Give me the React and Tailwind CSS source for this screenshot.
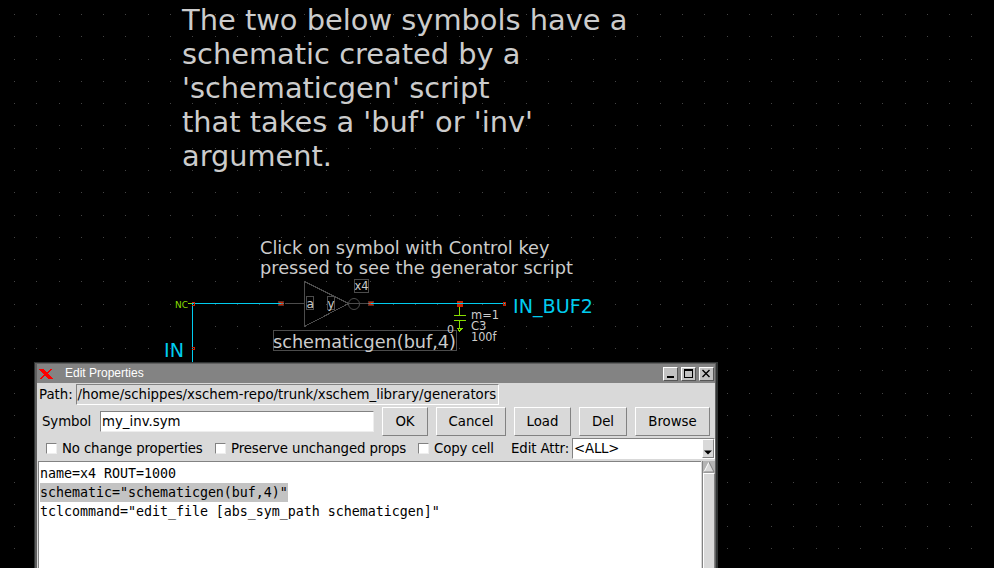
const STEP = 22.26;
const ORIGIN = 14.19;
const cols = Array.from({ length: 44 }, (_, i) => Math.round(ORIGIN + i * STEP));
const rows = Array.from({ length: 25 }, (_, i) => Math.round(ORIGIN + i * STEP));

function Grid() {
  return (
    <g fill="#444444">
      {rows.map((y) => cols.map((x) => <rect key={`${x}-${y}`} x={x} y={y} width="1" height="1" />))}
    </g>
  );
}

function Label({ x, y, size, width, fill = "#cccccc", children }) {
  return (
    <text x={x} y={y} fontSize={size} textLength={width} lengthAdjust="spacingAndGlyphs" fill={fill}>
      {children}
    </text>
  );
}

function Schematic() {
  return (
    <svg width="994" height="568" viewBox="0 0 994 568" className="block font-['DejaVu_Sans',sans-serif]">
      <g shapeRendering="crispEdges">
        <Grid />
        <g fill="none" stroke="#4c4c4c">
          <path d="M285 303.5H304.5M348 303.5H370" />
          <path d="M304.5 281.5V326.5M304.5 281.5L348.5 303.5L304.5 326.5" />
          <rect x="306.500" y="296.500" width="7" height="13" />
          <rect x="327.500" y="296.500" width="7" height="13" />
          <rect x="354.500" y="279.500" width="14" height="13" />
          <rect x="273.500" y="330.500" width="183" height="20" />
        </g>
        <rect x="278.500" y="301.500" width="5" height="4" fill="#cc2200" stroke="#5c2a20" />
        <rect x="368.500" y="301.500" width="5" height="4" fill="#cc2200" stroke="#5c2a20" />
        <path d="M281 303.500H284M368 303.500H371" stroke="#777" />
        <path d="M188 303.500H192" stroke="#88dd00" />
        <rect x="457" y="301" width="6" height="6" fill="#cc2200" />
        <path d="M192.500 362V303.500H281M371 303.500H505" fill="none" stroke="#00ccee" />
        <g fill="none" stroke="#cc2200">
          <path d="M191.500 302.500H194.500V305.500H191.500M191.500 347.500H194.500V349.500H191.500" />
          <rect x="503.500" y="302.500" width="2" height="3" />
        </g>
        <path d="M459.500 307V315.500M454 315.500H466M454 320.500H466M459.500 321V328M457 328.500H463M457.500 328.500L459.500 331L462 328.500" fill="none" stroke="#88dd00" />
      </g>
      <circle cx="354" cy="304" r="5.500" fill="none" stroke="#4c4c4c" />

      <Label x={182} y={30} size={28.5} width={445.5}>The two below symbols have a</Label>
      <Label x={182} y={64} size={28.5} width={338.5}>schematic created by a</Label>
      <Label x={182} y={98} size={28.5} width={307.5}>'schematicgen' script</Label>
      <Label x={182} y={132} size={28.5} width={351}>that takes a 'buf' or 'inv'</Label>
      <Label x={182} y={166} size={28.5} width={150}>argument.</Label>

      <Label x={260} y={254} size={17.8} width={289.5}>Click on symbol with Control key</Label>
      <Label x={260} y={274} size={17.8} width={313}>pressed to see the generator script</Label>
      <Label x={273} y={348} size={17.8} width={183}>schematicgen(buf,4)</Label>

      <Label x={354.5} y={290} size={12} width={14}>x4</Label>
      <Label x={306.5} y={308} size={12} width={7.5}>a</Label>
      <Label x={327.5} y={308} size={12} width={7}>y</Label>
      <Label x={471} y={319} size={12} width={28}>m=1</Label>
      <Label x={471} y={330} size={12} width={15.5}>C3</Label>
      <Label x={471} y={341} size={12} width={25.5}>100f</Label>
      <Label x={447} y={333} size={11} width={7}>0</Label>
      <Label x={175} y={308} size={9} width={13} fill="#88dd00">NC</Label>
      <Label x={513} y={313} size={19} width={80} fill="#00ccee">IN_BUF2</Label>
      <Label x={164} y={357} size={19} width={20} fill="#00ccee">IN</Label>
    </svg>
  );
}

function TitleButton({ children }) {
  return (
    <div className="h-[14px] w-[15px] border border-t-white border-l-white border-r-[#555] border-b-[#555] bg-[#c3c3c3]">
      <svg width="13" height="12" viewBox="0 0 13 12" fill="none" stroke="#000" shapeRendering="crispEdges" className="block">
        {children}
      </svg>
    </div>
  );
}

function TitleBar() {
  return (
    <div className="flex h-[19px] shrink-0 items-start bg-[#838383] pl-[2px] pr-[1px]">
      <svg width="15" height="12" viewBox="0 0 15 12" className="mt-[4px]" shapeRendering="crispEdges">
        <path d="M0 1H5L14 11H9Z" fill="#ff0000" />
        <path d="M12.500 1L1 11" stroke="#ff0000" strokeWidth="1.400" />
      </svg>
      <span className="ml-[11px] w-[84px] whitespace-nowrap font-['Liberation_Sans',sans-serif] text-[12px] leading-[18px] text-white">Edit Properties</span>
      <div className="mt-[3px] ml-auto flex gap-[3px]">
        <TitleButton><path d="M3 9H10" strokeWidth="2" /></TitleButton>
        <TitleButton><path d="M2.500 1V9.500H10.500V1" /><path d="M2 2H11" strokeWidth="2" /></TitleButton>
        <TitleButton><path d="M2.500 2L9.500 9M9.500 2L2.500 9" strokeWidth="1.400" shapeRendering="auto" /></TitleButton>
      </div>
    </div>
  );
}

function Button({ className, children }) {
  return (
    <button className={`h-[29px] shrink-0 border border-t-white border-l-white border-r-[#828282] border-b-[#828282] bg-[#d9d9d9] pt-px ${className}`}>
      {children}
    </button>
  );
}

function Check({ className, textClass, children }) {
  return (
    <label className={`flex shrink-0 items-center whitespace-nowrap ${className}`}>
      <span className="h-[11px] w-[11px] shrink-0 border border-t-[#828282] border-l-[#828282] border-r-[#eee] border-b-[#eee] bg-white" />
      <span className={`ml-[5px] ${textClass}`}>{children}</span>
    </label>
  );
}

function EditDialog() {
  return (
    <div className="absolute top-[362px] left-[34px] h-[206px] w-[684px] overflow-hidden border-t border-r-2 border-l border-[#303333] bg-[#d9d9d9] font-['DejaVu_Sans',sans-serif] text-[13.33px] leading-[20px] text-black">
      <div className="flex h-[205px] flex-col border-t border-r border-l-2 border-[#606060]">
        <TitleBar />
        <div className="flex h-[23px] shrink-0 items-start pt-[1px] pl-[2px]">
          <span className="mt-[1px] w-[37px]">Path:</span>
          <div className="h-[21px] w-[423px] border border-t-[#828282] border-l-[#828282] border-r-white border-b-white pl-[0.5px] leading-[19px] tracking-[-0.01px] whitespace-nowrap">/home/schippes/xschem-repo/trunk/xschem_library/generators</div>
        </div>
        <div className="flex h-[31px] shrink-0 items-start gap-2 pt-[1px] pl-[5px]">
          <span className="mt-[5px] w-[50px] tracking-[-0.1px]">Symbol</span>
          <div className="mt-[4px] h-[21px] w-[274px] border border-t-[#828282] border-l-[#828282] border-r-[#eee] border-b-[#eee] bg-white pl-[1px]">my_inv.sym</div>
          <Button className="w-[46px]">OK</Button>
          <Button className="w-[70px]">Cancel</Button>
          <Button className="w-[57px]">Load</Button>
          <Button className="w-[48px]">Del</Button>
          <Button className="w-[75px]">Browse</Button>
        </div>
        <div className="flex h-[23px] shrink-0 items-center pl-[9px]">
          <Check className="w-[169px]" textClass="tracking-[-0.15px]">No change properties</Check>
          <Check className="w-[203px]" textClass="tracking-[-0.12px]">Preserve unchanged props</Check>
          <Check className="w-[93px]" textClass="tracking-[-0.12px]">Copy cell</Check>
          <span className="w-[61px] shrink-0 tracking-[-0.1px] whitespace-nowrap">Edit Attr:</span>
          <div className="flex h-[21px] w-[143px] shrink-0 border border-t-[#828282] border-l-[#828282] border-r-white border-b-white bg-white">
            <span className="flex-1 pl-[1px] tracking-[-0.2px]">&lt;ALL&gt;</span>
            <span className="flex h-[19px] w-[12px] shrink-0 items-end justify-center border border-t-white border-l-white border-r-[#828282] border-b-[#828282] bg-[#d9d9d9] pb-[2px]">
              <svg width="8" height="5" viewBox="0 0 8 5"><path d="M0 0.500H8L4 4.500Z" fill="#000" /></svg>
            </span>
          </div>
        </div>
        <div className="flex flex-1 pt-[1px] pl-[1px]">
          <div className="w-[663px] border-t border-l border-[#828282] bg-white pt-[2px] pl-[1px] font-['DejaVu_Sans_Mono',monospace] text-[13.33px] leading-[19px] tracking-[-0.03px]">
            <div>name=x4 ROUT=1000</div>
            <div className="w-[248px] bg-[#c3c3c3] whitespace-nowrap">schematic="schematicgen(buf,4)"</div>
            <div>tclcommand="edit_file [abs_sym_path schematicgen]"</div>
          </div>
          <div className="ml-[1px] flex w-[13px] flex-col border-l border-[#828282] bg-[#b3b3b3]">
            <svg width="12" height="12" viewBox="0 0 12 12" className="block shrink-0">
              <path d="M1 11L6 1L11 11Z" fill="#d9d9d9" />
              <path d="M1 11L6 1" stroke="#fff" />
              <path d="M6 1L11 11H1" fill="none" stroke="#828282" />
            </svg>
            <div className="flex-1 border-t border-r border-l border-t-white border-l-white border-r-[#828282] bg-[#d9d9d9]" />
          </div>
        </div>
      </div>
    </div>
  );
}

export default function App() {
  return (
    <main className="relative h-[568px] w-[994px] overflow-hidden bg-black">
      <Schematic />
      <EditDialog />
    </main>
  );
}
